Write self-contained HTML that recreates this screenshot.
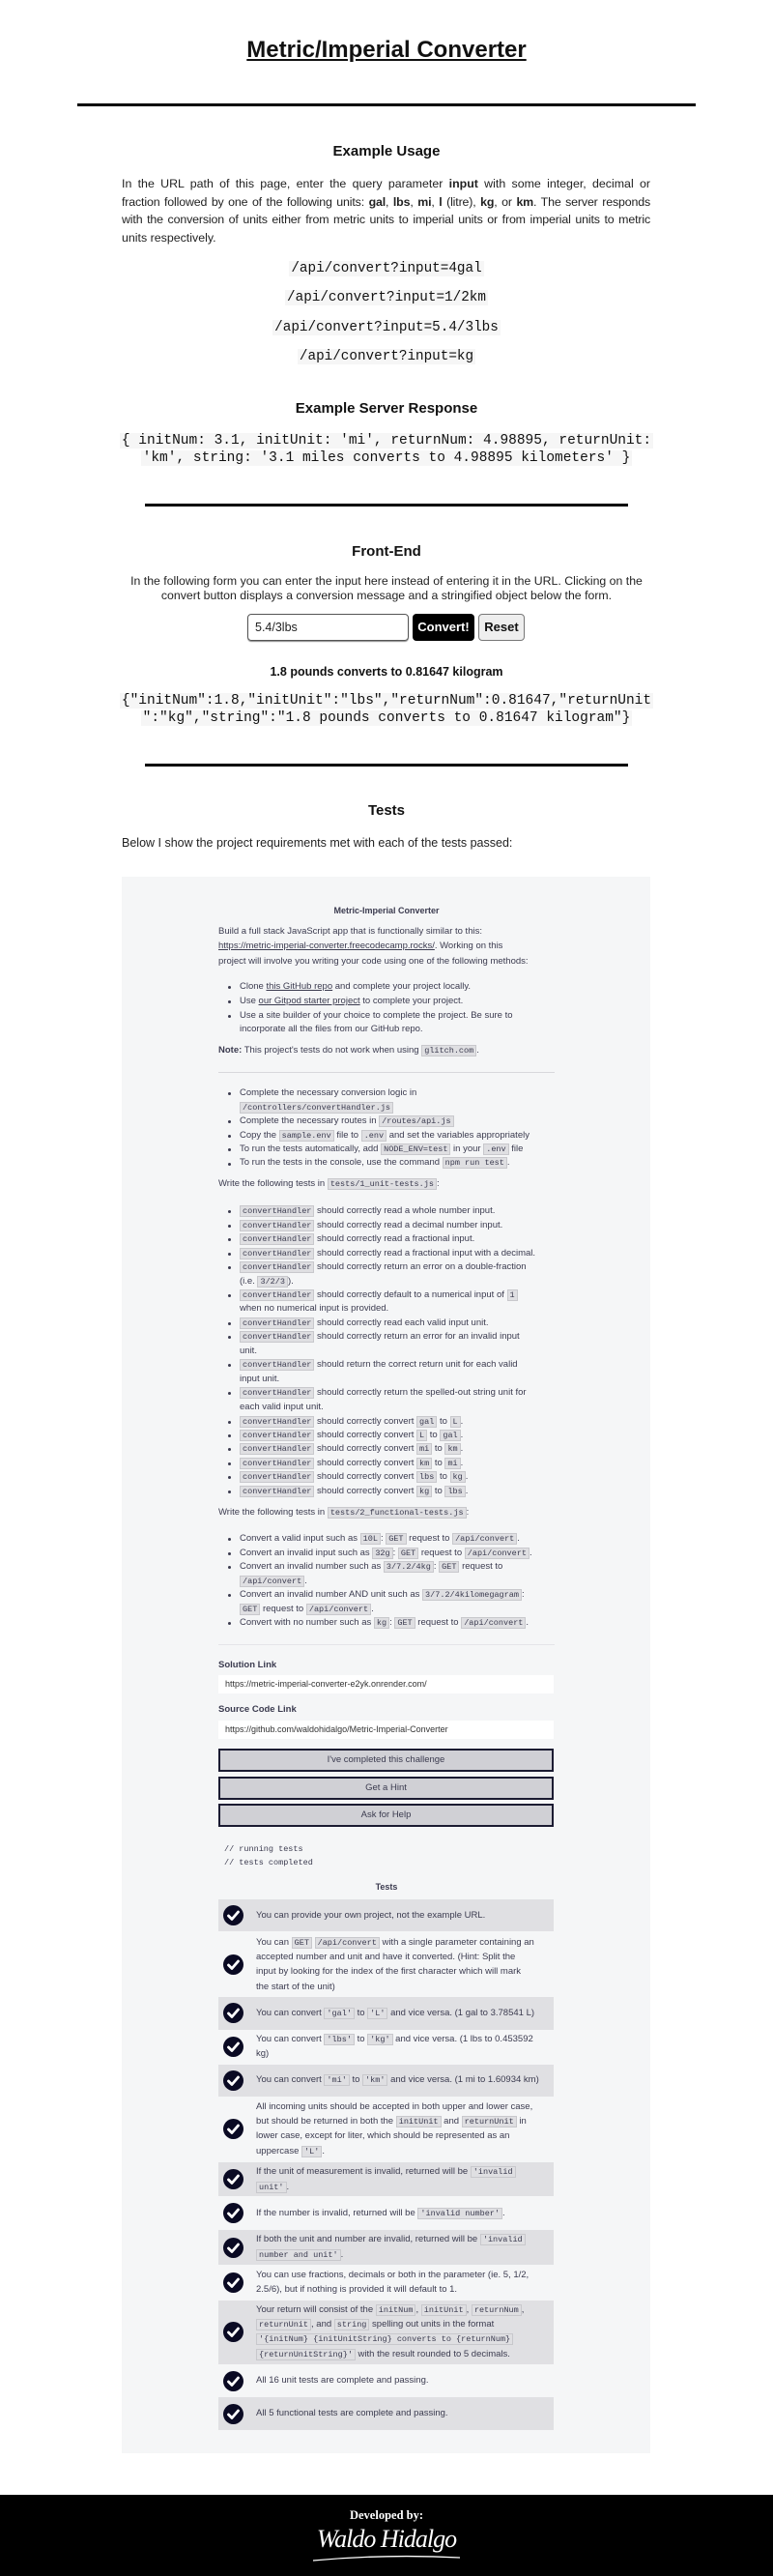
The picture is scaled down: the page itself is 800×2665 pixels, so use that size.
<!DOCTYPE html>
<html><head><meta charset="utf-8">
<style>
*{margin:0;padding:0;box-sizing:border-box}
body{width:800px;height:2665px;position:relative;background:#fff;font-family:"Liberation Sans",Arial,sans-serif;color:#111;overflow:hidden}
.a{position:absolute}
.c{position:absolute;left:0;width:800px;text-align:center;white-space:nowrap}
.hr{position:absolute;background:#000}
.code{font-family:"Liberation Mono",monospace;background:#f6f6f6;padding:0 2px}
.pl{position:absolute;left:126px;width:547px;font-size:12.4px;line-height:18.7px;height:18.7px;color:#222;text-align:justify;text-align-last:justify;white-space:nowrap;overflow:visible}
.box{position:absolute;left:126px;top:907px;width:547px;height:1631px;background:#f5f6f7}
.l{position:absolute;left:226px;white-space:nowrap;font-size:9.5px;line-height:14px;height:14px;color:#3b3b4f;font-family:"Liberation Sans","DejaVu Sans",sans-serif}
.l.i{left:248px}
.l.t{left:265px}
.b{position:absolute;left:236px;width:3px;height:3px;border-radius:50%;background:#3b3b4f}
.k{font-family:"Liberation Mono",monospace;font-size:8.5px;background:#dfdfe2;border:1px solid #c8c8cc;padding:0 2px}
.row{position:absolute;left:226px;width:347px;background:#e0e0e3}
u{text-decoration:underline}
.fb{position:absolute;left:226px;width:347px;height:24px;background:#d0d0d5;border:2px solid #1b1b32;font-size:9.5px;line-height:20px;text-align:center;color:#3b3b4f}
.inp{position:absolute;left:226px;width:347px;height:19px;background:#fff;font-size:9px;line-height:19px;padding-left:7px;color:#333}
</style></head><body>

<div class="c" style="top:38px;font-size:24px;font-weight:bold;line-height:28px;text-decoration:underline">Metric/Imperial Converter</div>
<div class="hr" style="left:80px;top:107px;width:640px;height:3px"></div>

<div class="c" style="top:148px;font-size:15px;font-weight:bold;line-height:18px">Example Usage</div>
<div class="pl" style="top:181px;white-space:normal">In the URL path of this page, enter the query parameter <b>input</b> with some integer, decimal or</div>
<div class="pl" style="top:199.7px;white-space:normal;letter-spacing:-0.15px">fraction followed by one of the following units: <b>gal</b>, <b>lbs</b>, <b>mi</b>, <b>l</b> (litre), <b>kg</b>, or <b>km</b>. The server responds</div>
<div class="pl" style="top:218.4px;white-space:normal;letter-spacing:-0.15px">with the conversion of units either from metric units to imperial units or from imperial units to metric</div>
<div class="pl" style="top:237.1px;text-align-last:left">units respectively.</div>

<div class="c" style="top:268px;font-size:14.3px;line-height:18px"><span class="code">/api/convert?input=4gal</span></div>
<div class="c" style="top:298px;font-size:14.3px;line-height:18px"><span class="code">/api/convert?input=1/2km</span></div>
<div class="c" style="top:329px;font-size:14.3px;line-height:18px"><span class="code">/api/convert?input=5.4/3lbs</span></div>
<div class="c" style="top:359px;font-size:14.3px;line-height:18px"><span class="code">/api/convert?input=kg</span></div>

<div class="c" style="top:414px;font-size:15px;font-weight:bold;line-height:18px">Example Server Response</div>
<div class="c" style="top:446px;font-size:14.5px;line-height:18px"><span class="code">{ initNum: 3.1, initUnit: 'mi', returnNum: 4.98895, returnUnit:</span></div>
<div class="c" style="top:464px;font-size:14.5px;line-height:18px"><span class="code">'km', string: '3.1 miles converts to 4.98895 kilometers' }</span></div>

<div class="hr" style="left:150px;top:521px;width:500px;height:3px"></div>

<div class="c" style="top:562px;font-size:15px;font-weight:bold;line-height:18px">Front-End</div>
<div class="c" style="top:594px;font-size:12.3px;line-height:15px;color:#222">In the following form you can enter the input here instead of entering it in the URL. Clicking on the</div>
<div class="c" style="top:609px;font-size:12.3px;line-height:15px;color:#222">convert button displays a conversion message and a stringified object below the form.</div>

<div class="a" style="left:256px;top:635px;width:167px;height:28px;border:1px solid #555;border-radius:4px;box-shadow:0 1px 1px #888;font-size:12.5px;line-height:26px;padding-left:7px;color:#222">5.4/3lbs</div>
<div class="a" style="left:427px;top:635px;width:64px;height:28px;background:#000;border-radius:4px;color:#fff;font-weight:bold;font-size:13px;line-height:28px;text-align:center">Convert!</div>
<div class="a" style="left:495px;top:635px;width:48px;height:28px;background:#eee;border:1px solid #777;border-radius:4px;font-weight:bold;font-size:13px;line-height:26px;text-align:center">Reset</div>

<div class="c" style="top:687px;font-size:12.5px;font-weight:bold;line-height:16px">1.8 pounds converts to 0.81647 kilogram</div>
<div class="c" style="top:715px;font-size:14.5px;line-height:18px"><span class="code">{"initNum":1.8,"initUnit":"lbs","returnNum":0.81647,"returnUnit</span></div>
<div class="c" style="top:733px;font-size:14.5px;line-height:18px"><span class="code">":"kg","string":"1.8 pounds converts to 0.81647 kilogram"}</span></div>

<div class="hr" style="left:150px;top:790px;width:500px;height:3px"></div>
<div class="c" style="top:830px;font-size:15px;font-weight:bold;line-height:18px">Tests</div>
<div class="a" style="left:126px;top:864px;font-size:12.5px;line-height:16px;color:#222">Below I show the project requirements met with each of the tests passed:</div>

<div class="box"></div>
<div class="c" style="top:935px;font-size:9px;font-weight:bold;line-height:14px;color:#3b3b4f">Metric-Imperial Converter</div>
<div class="l" style="top:957px">Build a full stack JavaScript app that is functionally similar to this:</div>
<div class="l" style="top:972px"><u>https://metric-imperial-converter.freecodecamp.rocks/</u>. Working on this</div>
<div class="l" style="top:988px">project will involve you writing your code using one of the following methods:</div>
<div class="b" style="top:1020px"></div><div class="l i" style="top:1014px">Clone <u>this GitHub repo</u> and complete your project locally.</div>
<div class="b" style="top:1035px"></div><div class="l i" style="top:1029px">Use <u>our Gitpod starter project</u> to complete your project.</div>
<div class="b" style="top:1050px"></div><div class="l i" style="top:1044px">Use a site builder of your choice to complete the project. Be sure to</div>
<div class="l i" style="top:1058px">incorporate all the files from our GitHub repo.</div>
<div class="l" style="top:1080px"><b>Note:</b> This project's tests do not work when using <span class="k">glitch.com</span>.</div>
<div class="a" style="left:226px;top:1109px;width:348px;height:1px;background:#d8d8dc"></div>
<div class="b" style="top:1130px"></div><div class="l i" style="top:1124px">Complete the necessary conversion logic in</div>
<div class="l i" style="top:1139px"><span class="k">/controllers/convertHandler.js</span></div>
<div class="b" style="top:1159px"></div><div class="l i" style="top:1153px">Complete the necessary routes in <span class="k">/routes/api.js</span></div>
<div class="b" style="top:1174px"></div><div class="l i" style="top:1168px">Copy the <span class="k">sample.env</span> file to <span class="k">.env</span> and set the variables appropriately</div>
<div class="b" style="top:1188px"></div><div class="l i" style="top:1182px">To run the tests automatically, add <span class="k">NODE_ENV=test</span> in your <span class="k">.env</span> file</div>
<div class="b" style="top:1203px"></div><div class="l i" style="top:1196px">To run the tests in the console, use the command <span class="k">npm run test</span>.</div>
<div class="l" style="top:1218px">Write the following tests in <span class="k">tests/1_unit-tests.js</span>:</div>

<div class="b" style="top:1252px"></div><div class="l i" style="top:1246px"><span class="k">convertHandler</span> should correctly read a whole number input.</div>
<div class="b" style="top:1267px"></div><div class="l i" style="top:1261px"><span class="k">convertHandler</span> should correctly read a decimal number input.</div>
<div class="b" style="top:1281px"></div><div class="l i" style="top:1275px"><span class="k">convertHandler</span> should correctly read a fractional input.</div>
<div class="b" style="top:1296px"></div><div class="l i" style="top:1290px"><span class="k">convertHandler</span> should correctly read a fractional input with a decimal.</div>
<div class="b" style="top:1310px"></div><div class="l i" style="top:1304px"><span class="k">convertHandler</span> should correctly return an error on a double-fraction</div>
<div class="l i" style="top:1319px">(i.e. <span class="k">3/2/3</span>).</div>
<div class="b" style="top:1339px"></div><div class="l i" style="top:1333px"><span class="k">convertHandler</span> should correctly default to a numerical input of <span class="k">1</span></div>
<div class="l i" style="top:1347px">when no numerical input is provided.</div>
<div class="b" style="top:1368px"></div><div class="l i" style="top:1362px"><span class="k">convertHandler</span> should correctly read each valid input unit.</div>
<div class="b" style="top:1382px"></div><div class="l i" style="top:1376px"><span class="k">convertHandler</span> should correctly return an error for an invalid input</div>
<div class="l i" style="top:1391px">unit.</div>
<div class="b" style="top:1411px"></div><div class="l i" style="top:1405px"><span class="k">convertHandler</span> should return the correct return unit for each valid</div>
<div class="l i" style="top:1420px">input unit.</div>
<div class="b" style="top:1440px"></div><div class="l i" style="top:1434px"><span class="k">convertHandler</span> should correctly return the spelled-out string unit for</div>
<div class="l i" style="top:1449px">each valid input unit.</div>
<div class="b" style="top:1470px"></div><div class="l i" style="top:1464px"><span class="k">convertHandler</span> should correctly convert <span class="k">gal</span> to <span class="k">L</span>.</div>
<div class="b" style="top:1484px"></div><div class="l i" style="top:1478px"><span class="k">convertHandler</span> should correctly convert <span class="k">L</span> to <span class="k">gal</span>.</div>
<div class="b" style="top:1498px"></div><div class="l i" style="top:1492px"><span class="k">convertHandler</span> should correctly convert <span class="k">mi</span> to <span class="k">km</span>.</div>
<div class="b" style="top:1513px"></div><div class="l i" style="top:1507px"><span class="k">convertHandler</span> should correctly convert <span class="k">km</span> to <span class="k">mi</span>.</div>
<div class="b" style="top:1527px"></div><div class="l i" style="top:1521px"><span class="k">convertHandler</span> should correctly convert <span class="k">lbs</span> to <span class="k">kg</span>.</div>
<div class="b" style="top:1542px"></div><div class="l i" style="top:1536px"><span class="k">convertHandler</span> should correctly convert <span class="k">kg</span> to <span class="k">lbs</span>.</div>
<div class="l" style="top:1558px">Write the following tests in <span class="k">tests/2_functional-tests.js</span>:</div>
<div class="b" style="top:1591px"></div><div class="l i" style="top:1585px">Convert a valid input such as <span class="k">10L</span>: <span class="k">GET</span> request to <span class="k">/api/convert</span>.</div>
<div class="b" style="top:1606px"></div><div class="l i" style="top:1600px">Convert an invalid input such as <span class="k">32g</span>: <span class="k">GET</span> request to <span class="k">/api/convert</span>.</div>
<div class="b" style="top:1620px"></div><div class="l i" style="top:1614px">Convert an invalid number such as <span class="k">3/7.2/4kg</span>: <span class="k">GET</span> request to</div>
<div class="l i" style="top:1629px"><span class="k">/api/convert</span>.</div>
<div class="b" style="top:1649px"></div><div class="l i" style="top:1643px">Convert an invalid number AND unit such as <span class="k">3/7.2/4kilomegagram</span>:</div>
<div class="l i" style="top:1658px"><span class="k">GET</span> request to <span class="k">/api/convert</span>.</div>
<div class="b" style="top:1678px"></div><div class="l i" style="top:1672px">Convert with no number such as <span class="k">kg</span>: <span class="k">GET</span> request to <span class="k">/api/convert</span>.</div>
<div class="a" style="left:226px;top:1701px;width:348px;height:1px;background:#e4e4e8"></div>

<div class="l" style="top:1716px;font-weight:bold">Solution Link</div>
<div class="inp" style="top:1733px">https://metric-imperial-converter-e2yk.onrender.com/</div>
<div class="l" style="top:1762px;font-weight:bold">Source Code Link</div>
<div class="inp" style="top:1780px">https://github.com/waldohidalgo/Metric-Imperial-Converter</div>
<div class="fb" style="top:1809px">I've completed this challenge</div>
<div class="fb" style="top:1838px">Get a Hint</div>
<div class="fb" style="top:1866px">Ask for Help</div>
<div class="l" style="top:1906px;left:232px;font-family:'Liberation Mono',monospace;font-size:8.5px">// running tests</div>
<div class="l" style="top:1920px;left:232px;font-family:'Liberation Mono',monospace;font-size:8.5px">// tests completed</div>
<div class="c" style="top:1945px;font-size:9px;font-weight:bold;line-height:14px;color:#3b3b4f">Tests</div>

<div class="row" style="top:1965px;height:33px"></div>
<div class="row" style="top:2066px;height:34px"></div>
<div class="row" style="top:2136px;height:33px"></div>
<div class="row" style="top:2237px;height:35px"></div>
<div class="row" style="top:2307px;height:36px"></div>
<div class="row" style="top:2380px;height:66px"></div>
<div class="row" style="top:2480px;height:34px"></div>

<svg width="0" height="0" style="position:absolute"><defs><symbol id="ck" viewBox="0 0 21 21"><circle cx="10.5" cy="10.5" r="10.5" fill="#0a0a23"/><path d="M5.5 11 L9 14.5 L15.5 7" fill="none" stroke="#fff" stroke-width="2.8" stroke-linecap="round" stroke-linejoin="round"/></symbol></defs></svg>
<svg class="a" style="left:231px;top:1971px" width="21" height="21"><use href="#ck"/></svg>
<svg class="a" style="left:231px;top:2022px" width="21" height="21"><use href="#ck"/></svg>
<svg class="a" style="left:231px;top:2072px" width="21" height="21"><use href="#ck"/></svg>
<svg class="a" style="left:231px;top:2107px" width="21" height="21"><use href="#ck"/></svg>
<svg class="a" style="left:231px;top:2142px" width="21" height="21"><use href="#ck"/></svg>
<svg class="a" style="left:231px;top:2192px" width="21" height="21"><use href="#ck"/></svg>
<svg class="a" style="left:231px;top:2244px" width="21" height="21"><use href="#ck"/></svg>
<svg class="a" style="left:231px;top:2279px" width="21" height="21"><use href="#ck"/></svg>
<svg class="a" style="left:231px;top:2315px" width="21" height="21"><use href="#ck"/></svg>
<svg class="a" style="left:231px;top:2351px" width="21" height="21"><use href="#ck"/></svg>
<svg class="a" style="left:231px;top:2402px" width="21" height="21"><use href="#ck"/></svg>
<svg class="a" style="left:231px;top:2453px" width="21" height="21"><use href="#ck"/></svg>
<svg class="a" style="left:231px;top:2487px" width="21" height="21"><use href="#ck"/></svg>

<div class="l t" style="top:1975px">You can provide your own project, not the example URL.</div>
<div class="l t" style="top:2003px">You can <span class="k">GET</span> <span class="k">/api/convert</span> with a single parameter containing an</div>
<div class="l t" style="top:2018px">accepted number and unit and have it converted. (Hint: Split the</div>
<div class="l t" style="top:2033px">input by looking for the index of the first character which will mark</div>
<div class="l t" style="top:2049px">the start of the unit)</div>
<div class="l t" style="top:2076px">You can convert <span class="k">'gal'</span> to <span class="k">'L'</span> and vice versa. (1 gal to 3.78541 L)</div>
<div class="l t" style="top:2103px">You can convert <span class="k">'lbs'</span> to <span class="k">'kg'</span> and vice versa. (1 lbs to 0.453592</div>
<div class="l t" style="top:2118px">kg)</div>
<div class="l t" style="top:2145px">You can convert <span class="k">'mi'</span> to <span class="k">'km'</span> and vice versa. (1 mi to 1.60934 km)</div>
<div class="l t" style="top:2173px">All incoming units should be accepted in both upper and lower case,</div>
<div class="l t" style="top:2188px">but should be returned in both the <span class="k">initUnit</span> and <span class="k">returnUnit</span> in</div>
<div class="l t" style="top:2203px">lower case, except for liter, which should be represented as an</div>
<div class="l t" style="top:2219px">uppercase <span class="k">'L'</span>.</div>
<div class="l t" style="top:2240px">If the unit of measurement is invalid, returned will be <span class="k">'invalid</span></div>
<div class="l t" style="top:2256px"><span class="k">unit'</span>.</div>
<div class="l t" style="top:2283px">If the number is invalid, returned will be <span class="k">'invalid number'</span>.</div>
<div class="l t" style="top:2310px">If both the unit and number are invalid, returned will be <span class="k">'invalid</span></div>
<div class="l t" style="top:2326px"><span class="k">number and unit'</span>.</div>
<div class="l t" style="top:2347px">You can use fractions, decimals or both in the parameter (ie. 5, 1/2,</div>
<div class="l t" style="top:2362px">2.5/6), but if nothing is provided it will default to 1.</div>
<div class="l t" style="top:2383px">Your return will consist of the <span class="k">initNum</span>, <span class="k">initUnit</span>, <span class="k">returnNum</span>,</div>
<div class="l t" style="top:2398px"><span class="k">returnUnit</span>, and <span class="k">string</span> spelling out units in the format</div>
<div class="l t" style="top:2413px"><span class="k">'{initNum} {initUnitString} converts to {returnNum}</span></div>
<div class="l t" style="top:2429px"><span class="k">{returnUnitString}'</span> with the result rounded to 5 decimals.</div>
<div class="l t" style="top:2456px">All 16 unit tests are complete and passing.</div>
<div class="l t" style="top:2490px">All 5 functional tests are complete and passing.</div>

<div class="a" style="left:0;top:2581px;width:800px;height:84px;background:#000"></div>
<div class="c" style="top:2595px;font-family:'Liberation Serif',serif;font-weight:bold;font-size:12.5px;line-height:15px;color:#fff">Developed by:</div>
<div class="c" style="top:2612px;font-family:'Liberation Serif',serif;font-style:italic;font-size:26px;line-height:30px;color:#fff;letter-spacing:-1px">Waldo Hidalgo</div>
<svg class="a" style="left:320px;top:2640px" width="160" height="12"><path d="M4 9 Q80 2 156 6" stroke="#fff" stroke-width="1.3" fill="none"/></svg>
</body></html>
